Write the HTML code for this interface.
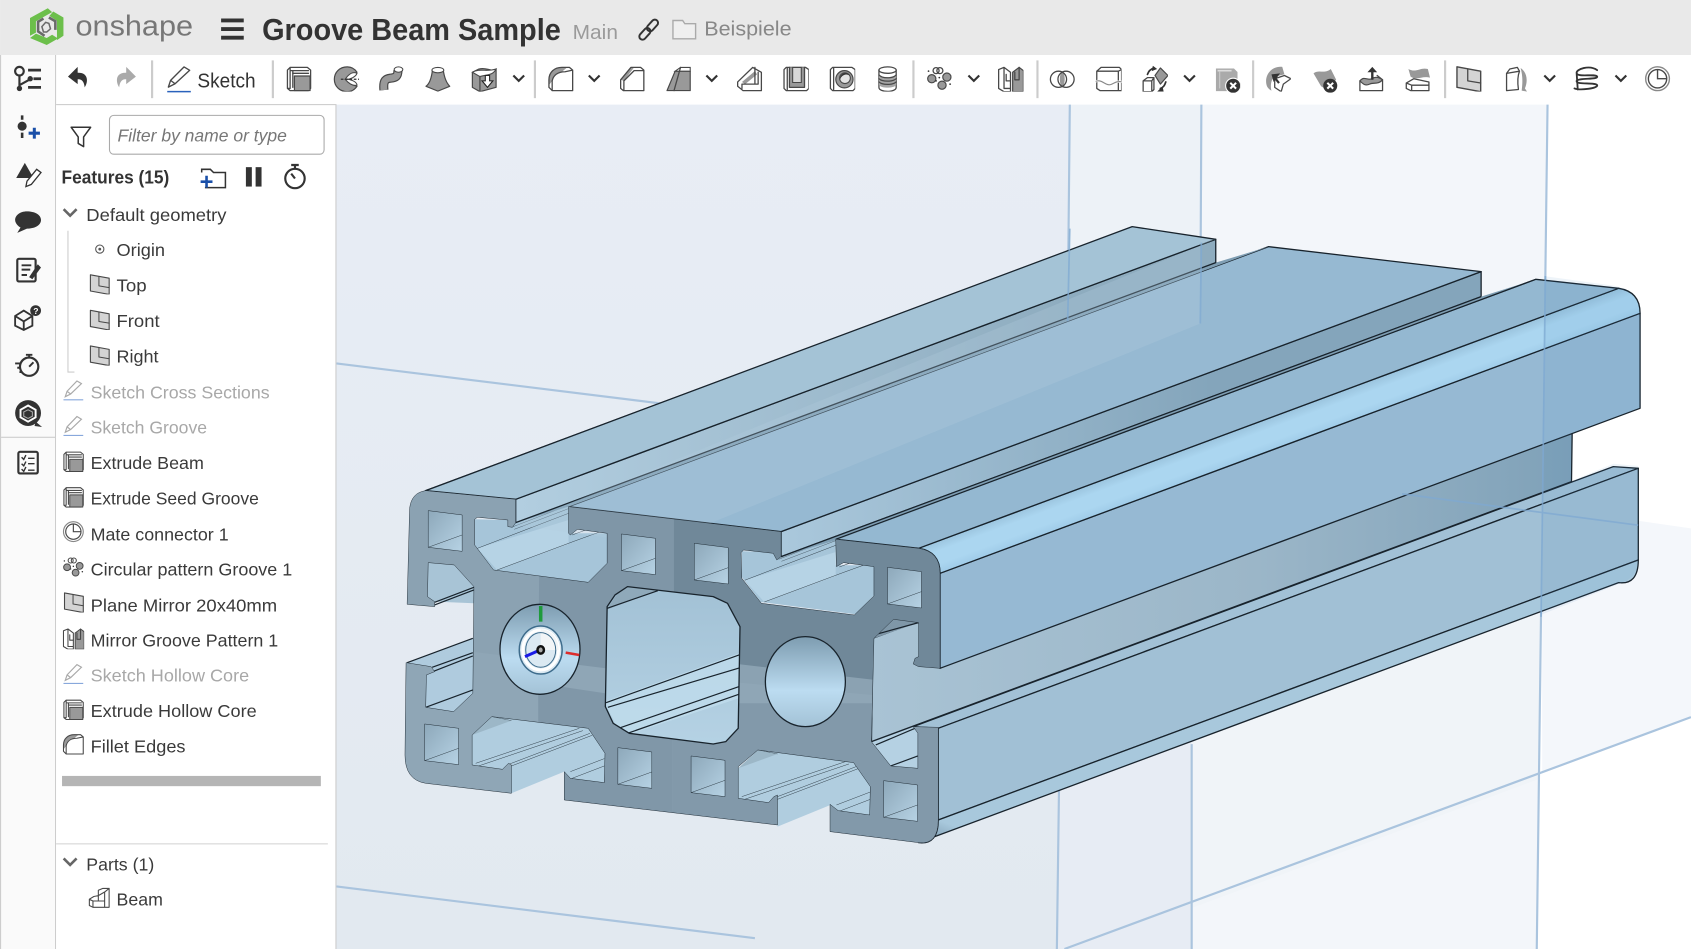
<!DOCTYPE html>
<html><head><meta charset="utf-8"><title>Groove Beam Sample</title>
<style>
html,body{margin:0;padding:0;background:#fff;overflow:hidden}
svg{display:block}
text{font-family:"Liberation Sans",sans-serif;fill:#3a3a3a}
.t{font-size:16px;transform:translateY(.6px)}
.g{fill:#a8a8a8}
.b *{vector-effect:non-scaling-stroke}
.e{stroke:#18232c;stroke-width:1.3;stroke-linejoin:round}
.l{stroke:#18232c;stroke-width:1.2;fill:none}
.i{fill:none;stroke:#484848;stroke-width:1.2;stroke-linejoin:round;stroke-linecap:round}
.f{fill:#999;stroke:#484848;stroke-width:1.100;stroke-linejoin:round}
.n{fill:#999;stroke:none}
.k{fill:#333;stroke:none}
.c{fill:none;stroke:#333;stroke-width:2;stroke-linecap:round;stroke-linejoin:round}
</style></head>
<body>
<svg width="1691" height="949" viewBox="0 0 1568 880" xmlns="http://www.w3.org/2000/svg">
<defs>
<symbol id="ext" viewBox="0 0 24 24"><path class="i" d="M1.500 4 4 1.500H20L23 4V21L21 23H4L1.500 21ZM4 1.500V21L1.500 21M4 4.500H21M6.500 4.500V20"/><path class="f" d="M8 9.500H22.500V23H8Z"/><path class="i" d="M6.500 7H21" stroke="#aaa"/></symbol>
<symbol id="rev" viewBox="0 0 24 24"><path class="f" d="M13 1C6 1 1 6 1 12.500S6 24 13 24C17 24 20 22 22 19 18 18 14 16 12 13 15 10 19 8 22 6 20 3 17 1 13 1Z"/><path d="M11 12.500C14 8 18 5 22 7 21 10 16 13 11 12.500ZM11 12.500C14 16 18 19 22 18 22 15 16 12 11 12.500Z" fill="#fff" stroke="#484848"/><path d="M7 12.500H24" stroke="#333" stroke-width="1.100" stroke-dasharray="2.500 1.500"/></symbol>
<symbol id="swp" viewBox="0 0 24 24"><path d="M5 22.500C4 13 7 12 11 11.500 16 11 18 10 18 4" fill="none" stroke="#484848" stroke-width="8.500"/><path d="M5 22.500C4 13 7 12 11 11.500 16 11 18 10 18 4" fill="none" stroke="#999" stroke-width="6.300"/><ellipse cx="18.500" cy="3.500" rx="4" ry="2.500" fill="#fff" stroke="#484848"/></symbol>
<symbol id="lof" viewBox="0 0 24 24"><path class="f" d="M7 4C6 12 4 17 1 19L12 23.500 23 19C20 16 18 11 17 4Z"/><ellipse cx="12" cy="4" rx="5.500" ry="2.500" fill="#fff" stroke="#484848"/></symbol>
<symbol id="thk" viewBox="0 0 24 24"><path class="f" d="M1 6V20L8 24 23 20V3C17 6 15 1 7 3Z"/><path d="M1 6C8 2 14 6 23 3 20 9 15 8 8 10Z" fill="#fff" stroke="#484848"/><path d="M8 10V24" class="i"/><path d="M13 9H17V14H20L15 20 10 14H13Z" fill="#fff" stroke="#222"/></symbol>
<symbol id="fil" viewBox="0 0 24 24"><path class="n" d="M1 13C1 6 6 1.500 13 1.500H18L13 5.500C8 6 5 9 4 14L1 18Z"/><path class="i" d="M1 13C1 6 6 1.500 13 1.500H20L23 4V23H4L1 20ZM4 14V23M23 4 16 5.500C9 5.500 5 9 4 14"/></symbol>
<symbol id="cha" viewBox="0 0 24 24"><path class="n" d="M1.500 13 11 1.500H14L4.500 14Z"/><path class="i" d="M1.500 13 11 1.500H20L23 4V23H4L1.500 21ZM4.500 14V23M4.500 14 14 4.500H23"/></symbol>
<symbol id="dra" viewBox="0 0 24 24"><path class="f" d="M9 5H23V23H1.500Z"/><path d="M9 5 14 1.500H23V5Z" fill="#fff" stroke="#484848"/><path class="i" d="M14 1.500 8 23"/></symbol>
<symbol id="rib" viewBox="0 0 24 24"><path class="i" d="M1 15 15 1.500 23 6V23H6L1 19Z"/><path class="f" style="stroke:none" d="M5 15 17 5 19 8 8 17Z"/><path class="i" d="M5 21V17H20M17 1.500V17M20 6V17"/></symbol>
<symbol id="she" viewBox="0 0 24 24"><path class="i" d="M1 3.500 3 1.500H21L24 3.500V21L22 23H3L1 21ZM4 1.500V22"/><path class="n" d="M6 1.500H20V20H6Z"/><path d="M9 1.500V15.500H17V1.500Z" fill="#d8d8d8" stroke="#484848"/><path class="i" d="M6 1.500V20H20V1.500"/></symbol>
<symbol id="hol" viewBox="0 0 24 24"><path class="i" d="M1 3.500 3 1.500H21L24 3.500V21L22 23H3L1 21ZM4 1.500V22"/><circle class="f" cx="14" cy="12.500" r="8"/><circle cx="14.500" cy="11.500" r="5" fill="#e4e4e4" stroke="#484848"/><path d="M10 13A5 5 0 0 1 19 9 6 6 0 0 0 10 13Z" fill="#333"/></symbol>
<symbol id="thr" viewBox="0 0 24 24"><path class="i" d="M4 4V20C4 25 20 25 20 20V4"/><ellipse class="i" cx="12" cy="4" rx="8" ry="3"/><path d="M4 8.500C7 12 17 12 20 8.500V18C17 21 7 21 4 18Z" fill="#a5a5a5"/><path class="i" d="M4 8.500C7 12 17 12 20 8.500M4 12C7 15 17 15 20 12M4 15C7 18 17 18 20 15"/></symbol>
<symbol id="pat" viewBox="0 0 24 24"><circle class="i" cx="9" cy="4.500" r="2.800"/><circle class="i" cx="12.500" cy="4.500" r="2.800"/><circle class="f" cx="5" cy="12" r="3.800"/><circle class="f" cx="19" cy="10.500" r="3.800"/><circle class="f" cx="14.500" cy="18" r="3.800"/><circle class="k" cx="2" cy="5" r=".8"/><circle class="k" cx="22" cy="17" r=".8"/><circle class="k" cx="9" cy="14" r=".8"/><circle class="k" cx="12" cy="11" r=".8"/></symbol>
<symbol id="mir" viewBox="0 0 24 24"><path class="i" d="M1 3.500 6 1.500 12 6V24H6L1 21ZM6 1.500V21H12"/><path class="i" d="M12 14H8V8"/><path class="f" d="M14 24V6L20 1.500 24 4.500V24Z"/><path class="i" d="M20 1.500V13H16V6"/></symbol>
<symbol id="boo" viewBox="0 0 24 24"><path class="n" d="M12 5C15 8 15 17 12 20 9 17 9 8 12 5Z"/><circle class="i" cx="8.500" cy="12.500" r="7.500"/><circle class="i" cx="15.500" cy="12.500" r="7.500"/></symbol>
<symbol id="spl" viewBox="0 0 24 24"><path class="i" d="M1 5 5 1.500H22L24 3.500V23H4L1 21ZM1 5H21L24 3.500M21 5V23"/><path d="M-1 15C6 11 9 20 15 17 19 15 21 14 25 15" fill="none" stroke="#fff" stroke-width="2"/><path d="M-1 15C6 11 9 20 15 17 19 15 21 14 25 15" fill="none" stroke="#888" stroke-width="1.100"/></symbol>
<symbol id="tra" viewBox="0 0 24 24"><path class="f" d="M17 2 24 9 17 17 12 9Z"/><path class="i" d="M1 14 5 11H11V22L9 24H1ZM1 14H9V24M9 14 11 11"/><path class="c" style="stroke-width:1.600" d="M5 8C6 5 8 3 11 2M22 15C21 18 20 20 17 21"/><path class="k" d="M10 0 14 3 9 5ZM14 24 19 19 20 24Z"/></symbol>
<symbol id="del" viewBox="0 0 24 24"><path style="fill:#aaa;stroke:#aaa" d="M2 2H18L21 5V22H2Z"/><path d="M3 3.500H16" stroke="#ddd" stroke-width="1.500"/><path d="M5 4V20" stroke="#ccc"/><circle cx="17.500" cy="17.500" r="7" fill="#333" stroke="#fff"/><path d="M14.800 14.800 20.200 20.200M20.200 14.800 14.800 20.200" stroke="#fff" stroke-width="1.900"/></symbol>
<symbol id="mod" viewBox="0 0 24 24"><path class="n" d="M1 14C1 7 7 0 16 1L18 8 9 10C5 13 5 20 6 23 2 21 1 18 1 14Z"/><path class="i" d="M9 12 18 9 24 12 17 17 15 24 9 20Z" style="fill:#fff"/><path class="k" d="M6 8 14 7 8 15Z"/><path d="M9 11 13 16" stroke="#333" stroke-width="2"/></symbol>
<symbol id="dlf" viewBox="0 0 24 24"><path class="n" d="M1 6C6 2 11 7 17 2L22 12 13 21 8 18Z"/><circle class="k" cx="16.500" cy="17.500" r="6.500"/><path d="M13.800 14.800 19.200 20.200M19.200 14.800 13.800 20.200" stroke="#fff" stroke-width="1.900"/></symbol>
<symbol id="mov" viewBox="0 0 24 24"><path class="i" d="M2 14V23H23V13L18 9"/><path class="f" d="M2 14C6 9 9 14 13 12 16 10 19 10 23 13 19 18 14 15 11 17 7 19 5 17 2 14Z"/><path class="c" style="stroke-width:2.200;stroke-linecap:butt" d="M13.500 5V13"/><path class="k" d="M9 6 13.500 1 18 6Z"/></symbol>
<symbol id="rep" viewBox="0 0 24 24"><path class="n" d="M4 3C11 7 15 1 22 3L24 11C17 9 12 14 6 10Z"/><path class="i" d="M2 16 9 12 23 15V23H6L2 21ZM2 16 7 18H23M7 18V23"/></symbol>
<symbol id="pla" viewBox="0 0 24 24"><path d="M1 1 23 5V24L1 20Z" fill="#d4d4d4" stroke="#484848" stroke-width="1.300" stroke-linejoin="round"/><path class="i" d="M11 3V14L23 16"/></symbol>
<symbol id="off" viewBox="0 0 24 24"><path class="n" d="M16 2C22 6 23 14 20 21L22 24 17 23C18 15 18 9 16 2Z"/><path class="i" style="fill:#fff" d="M3 7 6 3 13 1.500 15 5C13 10 13 15 14 22L3 23Z M3 7 15 5"/></symbol>
<symbol id="hel" viewBox="0 0 24 24"><path class="c" style="stroke-width:1.700" d="M22 4C15-1 2 3 3 7S20 7 22 10C23 13 5 11 3 14 2 18 20 15 22 18 23 21 6 23 1 21M3 7 4 22"/></symbol>
<symbol id="mat" viewBox="0 0 24 24"><circle cx="12" cy="12" r="11" fill="none" stroke="#888" stroke-width="1.300"/><circle cx="12" cy="12" r="8.500" fill="none" stroke="#484848" stroke-width="1.300"/><path d="M12 3.500V12H20.500" fill="none" stroke="#484848" stroke-width="1.300"/></symbol>
<symbol id="skt" viewBox="0 0 24 24"><path class="i" d="M2 19 4 13 16 1 21 4 8 16Z M4 13 8 16"/><path d="M1 23H22" stroke="#2a62bc" stroke-width="1.400"/></symbol>
<symbol id="skg" viewBox="0 0 24 24"><path fill="none" stroke="#aaa" stroke-width="1.300" d="M3 19 5 13 16 1.500 21 4.500 9 16Z M5 13 9 16"/><path d="M1 22.500H23" stroke="#88a8dc" stroke-width="1.300"/></symbol>
<symbol id="par" viewBox="0 0 24 24"><path class="i" d="M1 13 6 10 11 9V3L16 1H23V22H5L1 20ZM1 13 5 15H11V9M5 15V22M11 9 18 5V15H11M18 5 23 1M18 15V22"/></symbol>
<symbol id="chv" viewBox="0 0 14 10"><path d="M2 2 7 7 12 2" fill="none" stroke="#333" stroke-width="2"/></symbol>

<linearGradient id="g1" x1="0" y1="0" x2="0" y2="1"><stop offset="0" stop-color="#e8edf5"/><stop offset="1" stop-color="#e2e9f0"/></linearGradient>
<linearGradient id="wall" gradientUnits="userSpaceOnUse" x1="1350" y1="0" x2="3310" y2="0"><stop offset="0" stop-color="#a9c3d4"/><stop offset=".55" stop-color="#9bb6c8"/><stop offset="1" stop-color="#7fa1b8"/></linearGradient>
<linearGradient id="round" gradientUnits="userSpaceOnUse" x1="1480" y1="235" x2="1514" y2="321"><stop offset="0" stop-color="#9cc5df"/><stop offset=".3" stop-color="#abd6f0"/><stop offset=".7" stop-color="#abd6f0"/><stop offset="1" stop-color="#9fcbe8"/></linearGradient>
<linearGradient id="roundb" gradientUnits="userSpaceOnUse" x1="1535" y1="1050" x2="1510" y2="1112"><stop offset="0" stop-color="#a8c8dc"/><stop offset="1" stop-color="#7f9db2"/></linearGradient>
<linearGradient id="sd" gradientUnits="userSpaceOnUse" x1="1095" y1="0" x2="2300" y2="0"><stop offset="0" stop-color="#aac8dc"/><stop offset="1" stop-color="#84a5bb"/></linearGradient>
<linearGradient id="sd2" gradientUnits="userSpaceOnUse" x1="352" y1="0" x2="1900" y2="0"><stop offset="0" stop-color="#b2cee0"/><stop offset="1" stop-color="#8eacbf"/></linearGradient>
<linearGradient id="hole" x1="0" y1="0" x2="0" y2="1"><stop offset="0" stop-color="#a2c1d5"/><stop offset="1" stop-color="#b5d2e4"/></linearGradient>
<linearGradient id="sq" x1="0" y1="0" x2="1" y2="1"><stop offset="0" stop-color="#8da8ba"/><stop offset="1" stop-color="#b6d2e4"/></linearGradient>
<linearGradient id="cir" x1="0" y1="0" x2="0" y2="1"><stop offset="0" stop-color="#7d9cb0"/><stop offset=".6" stop-color="#bcdcf1"/><stop offset="1" stop-color="#a3c2d6"/></linearGradient>

<path id="facep" d="M100 62 352 88V158L343 172 330 170V150L245 142 237 148V225L290 300 555 337 608 280V190L525 178 505 195 500 190V110L1095 185V260L1083 270 1073 250 990 240 983 248 985 325 1040 400 1300 435 1355 378V290L1270 278 1250 290 1248 208 1480 235Q1540 245 1540 310V595L1480 590 1465 582 1470 565 1480 560V458L1410 448 1355 505 1348 815 1402 888 1478 895V790L1465 770 1535 772V1050Q1535 1125 1480 1118L1232 1085V1003L1255 1022 1343 1035 1345 950 1298 878 1030 840 975 890V985L1060 998 1075 980 1085 975V1065L488 990V905L505 925 600 938 602 850 555 775 285 740 230 795V885L315 898 332 880 340 885V970L100 940Q42 930 42 855L45 578 115 590 125 605 102 615 100 712 178 725 232 670 235 350 180 285 107 278 105 380 125 395V410L48 403 55 115Q60 68 100 62Z"/>
<clipPath id="faceclip"><use href="#facep"/></clipPath>
<clipPath id="octo"><path d="M665 350 905 380 945 400 980 470 975 775 940 815 905 822 670 790 625 760 603 710 608 410 630 375Z"/></clipPath>

<g id="slotT">
<path fill="#a6c5d9" d="M237 148 330 150 352 158 500 105 500 190 608 190 608 280 555 337 290 300 237 225Z"/>
<path fill="#bad6e7" d="M245 235 300 300 500 222 500 150Z" opacity=".8"/>
<path class="l" d="M245 235 500 130M300 300 520 212 608 178"/>
<path class="l" stroke-opacity=".75" d="M340 172 500 106M348 178 500 116"/>
<path class="l" d="M510 195 600 160"/>
</g>
<g id="slotB">
<path fill="#b0cddf" d="M230 795 285 740 555 775 602 850V938L505 925 488 905 340 970V880L315 898 230 885Z"/>
<path class="l" d="M285 740 340 752M240 880 530 775M248 888 540 782M335 882 560 790M340 888 566 796"/>
<path class="l" d="M505 905 600 866M510 925 600 888"/>
<path fill="#90a8b8" d="M230 795 285 740 340 752Z" opacity=".6"/>
</g>
<g id="sqh"><path class="e" fill="url(#sq)" d="M0 0 95 13V122L0 110Z"/><path class="l" d="M0 110 95 73"/></g>
</defs>

<!-- chrome backgrounds -->
<rect width="1568" height="880" fill="#fff"/>
<rect width="1568" height="51" fill="#e9e9e9"/>

<!-- viewport -->
<path fill="#fff" d="M312 97H1568V880H312Z"/>
<path fill="url(#g1)" d="M312 97H992L980 880H312Z"/>
<path fill="#edf2f7" d="M992 97H1115L1105 880H980Z"/>
<path fill="#e7ecf4" d="M982 700 1105 660V880H980Z"/>
<path fill="#f3f6fa" d="M1115 97H1435L1425 880H1105Z"/>
<path fill="#f0f4f8" d="M1105 560 1428 470V722L1105 842Z"/>
<path fill="#f4f7fb" d="M1430 470 1568 490V665L1430 716Z"/>
<g fill="none" stroke="#aac4de" stroke-width="2">
<path d="M992 97 990 300M1114 97 1113 300M1435 97 1425 880M982 730 980 880M1105 690V880"/>
<path d="M312 337 620 375M312 822 700 870M1568 665 987 880"/>
</g>

<!-- beam -->
<g class="b" transform="translate(361.6 435.8) scale(.3312 .3091)">
<use href="#slotT"/>
<use href="#slotT" transform="translate(748 96)"/>
<path fill="#a8c4d6" d="M107 278 180 285 235 350V400L125 395 105 380Z"/>
<path class="l" d="M125 397 235 352M125 405 235 360"/>
<path fill="#afcbde" d="M45 578 235 505V670L178 725 100 712 102 615 125 605 115 590Z"/>
<path class="l" d="M48 578 232 505M118 592 232 548M122 604 232 558M100 712 232 660"/>
<use href="#slotB"/>
<use href="#slotB" transform="translate(745 100)"/>
<path fill="#b5d1e3" d="M1348 815 1402 888 1478 895V762Z"/>
<path class="l" d="M1402 888 1478 858M1360 825 1470 775"/>
<path class="e" fill="url(#wall)" d="M1352 505 1348 815 3308 35 3312 -275Z"/>
<path fill="#7f97a8" d="M1355 505 1410 448 1480 458Z"/>
<path class="l" d="M1365 492 1480 458"/>
<path class="e" fill="#a2c1d6" d="M1465 770 1535 775 3495 -5 3425 -10Z"/>
<path class="e" fill="#a1c0d5" d="M1535 775V1050L3495 270V-5Z"/>
<path class="e" fill="url(#roundb)" d="M1535 1050Q1535 1125 1480 1118L3440 338Q3495 345 3495 270Z"/>
<path class="e" fill="#96b9d3" d="M1540 310V595L3500 -185V-470Z"/>
<path class="e" fill="url(#round)" d="M1480 235Q1540 245 1540 310L3500 -470Q3500 -535 3440 -545Z"/>
<path class="e" fill="#94b8d1" d="M1248 208 1480 235 3440 -545 3208 -572Z"/>
<path class="e" fill="url(#sd)" d="M1095 185V260L3055 -520V-595Z"/>
<path fill="#7f9eb3" d="M1095 260 1250 210 3208 -572 3055 -520Z"/>
<path class="l" d="M1095 260 3055 -520M1248 208 3208 -572"/>
<path class="e" fill="#96b9d2" d="M500 110 1095 185 3055 -595 2460 -670Z"/>
<path fill="#7f9eb3" d="M352 158 500 110 2460 -670 2312 -622Z"/>
<path class="e" fill="url(#sd2)" d="M352 88V158L2312 -622V-692Z"/>
<path class="e" fill="#7f95a4" d="M70 82 100 62 2078 -728 2030 -702Z"/>
<path class="e" fill="#a4c3d6" d="M100 62 352 88 2312 -692 2078 -730Z"/>
</g>

<!-- plane tint on beam -->
<path fill="#b4cee0" opacity=".28" d="M1113 300 610 505 478 487 1127 222H1113Z"/>
<path fill="#3f86bc" opacity=".09" d="M1432 256 1497 265Q1521 270 1521 296V378L1457 402V446L1496 430 1519 432V520Q1519 536 1500 542L1429 570Z"/>
<g fill="none" stroke="#7fa9d2" stroke-width="1.600" opacity=".75">
<path d="M992 212 990 298M1114 225 1113 300M1433 256 1429 572"/>
<path d="M1300 458 1519 487"/>
</g>

<!-- front face -->
<g class="b" transform="translate(361.6 435.8) scale(.3312 .3091)">
<use href="#facep" fill="#8ba2b2"/>
<g clip-path="url(#faceclip)">
<path fill="#7f96a7" d="M420 0H800V700L415 650Z"/>
<path fill="#708899" d="M795 0H1600V660L795 560Z"/>
<path fill="#8fa6b6" d="M0 515 795 620 1600 700V1200H0Z"/>
<path fill="#8097a8" d="M415 640 790 700V1200H415Z"/>
<path fill="#8299aa" d="M790 700 1600 700V1200H790Z"/>
</g>
<use href="#facep" fill="none" class="e"/>
<use href="#sqh" x="107" y="122"/><use href="#sqh" x="648" y="192"/>
<use href="#sqh" x="852" y="220"/><use href="#sqh" x="1393" y="292"/>
<use href="#sqh" x="97" y="762"/><use href="#sqh" x="638" y="833"/>
<use href="#sqh" x="843" y="858"/><use href="#sqh" x="1382" y="932"/>
<path fill="url(#hole)" d="M665 350 905 380 945 400 980 470 975 775 940 815 905 822 670 790 625 760 603 710 608 410 630 375Z"/>
<g clip-path="url(#octo)">
<path fill="#c2deee" d="M600 695 990 545V680L650 800Z" opacity=".7"/>
<path fill="#8fa9ba" d="M605 420 650 350 750 362Z"/>
<path class="l" d="M605 698 990 550M610 712 990 590M640 775 990 645M665 790 990 668M608 415 750 362"/>
</g>
<path class="e" fill="none" d="M665 350 905 380 945 400 980 470 975 775 940 815 905 822 670 790 625 760 603 710 608 410 630 375Z"/>
<ellipse class="e" fill="url(#cir)" cx="1163" cy="635" rx="112" ry="135"/>
<ellipse class="e" fill="url(#cir)" cx="420" cy="538" rx="112" ry="135"/>
<ellipse cx="422" cy="540" rx="60" ry="72" fill="#dbe9f2" stroke="#3e6c8c" stroke-width="1.500"/>
<ellipse cx="422" cy="540" rx="50" ry="60" fill="none" stroke="#fff" stroke-width="3"/>
<path d="M422 540V478A50 60 0 0 1 472 540Z" fill="#f2f5f7"/>
<ellipse cx="422" cy="540" rx="42" ry="52" fill="none" stroke="#3e6c8c" stroke-width="1"/>
<path d="M422 408V455" stroke="#1f9a3c" stroke-width="3.500"/>
<path d="M492 548 530 555" stroke="#dd2c2c" stroke-width="2.500"/>
<path d="M378 560 420 540" stroke="#1a1ae6" stroke-width="3"/>
<ellipse cx="422" cy="540" rx="9" ry="11" fill="#aaa" stroke="#111" stroke-width="2.500"/>
</g>

<!-- header -->
<g transform="translate(43.300 24.700)">
<g fill="#6cbf4b">
<path d="M1-17-15.500-8V8.500L-10 5.500V-5L5-13.500Z"/>
<path d="M6-14 15.500-8.500V8.500L9.500 12.500V-5.500L2.500-10Z" />
<path d="M-15.500 10.500 0 17 10.500 11 5 7.500 0 10.500-10 6.500Z"/>
</g>
<path d="M2-8.500 8-5V3M-2 8.500-8 4.500V-4.500L-3-7.500" fill="none" stroke="#6a6a6a" stroke-width="2.400"/>
<path d="M-3 5-4.500 0-1-4 2-3 3.500 2 0 5Z" fill="none" stroke="#6a6a6a" stroke-width="1.400"/>
</g>
<text x="70" y="33" font-size="27" style="fill:#777" textLength="109" lengthAdjust="spacingAndGlyphs">onshape</text>
<path d="M205 19H226M205 27H226M205 35H226" stroke="#333" stroke-width="3.600"/>
<text x="243" y="37" font-size="28" font-weight="700" style="fill:#333" textLength="277" lengthAdjust="spacingAndGlyphs">Groove Beam Sample</text>
<text x="531" y="36" font-size="19" style="fill:#9a9a9a" textLength="42" lengthAdjust="spacingAndGlyphs">Main</text>
<g transform="rotate(-48 601.500 27.500)" fill="none" stroke="#333" stroke-width="1.800"><rect x="590" y="24.500" width="12.500" height="6" rx="3"/><rect x="600.500" y="24.500" width="12.500" height="6" rx="3"/></g>
<path d="M624 36V19H633L635 22H645V36Z" fill="#efefef" stroke="#aaa" stroke-width="1.300"/>
<text x="653" y="33" font-size="19" style="fill:#888" textLength="81" lengthAdjust="spacingAndGlyphs">Beispiele</text>

<!-- toolbar -->
<g fill="#ccc">
<rect x="140" y="56" width="2" height="35"/><rect x="252" y="56" width="2" height="35"/><rect x="495" y="56" width="2" height="35"/><rect x="846" y="56" width="2" height="35"/><rect x="961" y="56" width="2" height="35"/><rect x="1161" y="56" width="2" height="35"/><rect x="1339" y="56" width="2" height="35"/>
</g>
<path d="M72 62 63 71 72 78V73.500C76 73 78 76 78.500 81 82 76 82 67 72 67.500Z" fill="#333"/>
<path d="M117 62 126 71 117 78V73.500C113 73 111 76 110.500 81 107 76 107 67 117 67.500Z" fill="#aaa"/>
<use href="#skt" x="154" y="61" width="25" height="25"/>
<text x="183" y="81" font-size="18.500" style="fill:#333" textLength="54" lengthAdjust="spacingAndGlyphs">Sketch</text>
<use href="#ext" x="265" y="61" width="24" height="24"/>
<use href="#rev" x="309" y="61" width="24" height="24"/>
<use href="#swp" x="351" y="61" width="24" height="24"/>
<use href="#lof" x="394" y="61" width="24" height="24"/>
<use href="#thk" x="437" y="61" width="24" height="24"/>
<use href="#chv" x="474" y="68" width="14" height="10"/>
<use href="#fil" x="508" y="61" width="24" height="24"/>
<use href="#chv" x="544" y="68" width="14" height="10"/>
<use href="#cha" x="574" y="61" width="24" height="24"/>
<use href="#dra" x="617" y="61" width="24" height="24"/>
<use href="#chv" x="653" y="68" width="14" height="10"/>
<use href="#rib" x="683" y="61" width="24" height="24"/>
<use href="#she" x="726" y="61" width="24" height="24"/>
<use href="#hol" x="769" y="61" width="24" height="24"/>
<use href="#thr" x="811" y="61" width="24" height="24"/>
<use href="#pat" x="859" y="61" width="24" height="24"/>
<use href="#chv" x="896" y="68" width="14" height="10"/>
<use href="#mir" x="925" y="61" width="24" height="24"/>
<use href="#boo" x="973" y="61" width="24" height="24"/>
<use href="#spl" x="1016" y="61" width="24" height="24"/>
<use href="#tra" x="1059" y="61" width="24" height="24"/>
<use href="#chv" x="1096" y="68" width="14" height="10"/>
<use href="#del" x="1126" y="62" width="24" height="24"/>
<use href="#mod" x="1173" y="61" width="24" height="24"/>
<use href="#dlf" x="1217" y="62" width="24" height="24"/>
<use href="#mov" x="1259" y="61" width="24" height="24"/>
<use href="#rep" x="1302" y="61" width="24" height="24"/>
<use href="#pla" x="1350" y="61" width="24" height="24"/>
<use href="#off" x="1394" y="61" width="24" height="24"/>
<use href="#chv" x="1430" y="68" width="14" height="10"/>
<use href="#hel" x="1459" y="61" width="24" height="24"/>
<use href="#chv" x="1496" y="68" width="14" height="10"/>
<use href="#mat" x="1525" y="61" width="24" height="24"/>

<!-- left rail -->
<rect x="0" y="51" width="51" height="829" fill="#fafafa"/>
<rect x="0" y="51" width="1" height="829" fill="#ccc"/>
<rect x="51" y="51" width="1" height="829" fill="#ccc"/>
<rect x="1" y="405" width="50" height="1" fill="#ccc"/>
<g>
<circle cx="18" cy="66" r="4" fill="none" stroke="#333" stroke-width="2"/><path d="M18 70V82M18 79 27 74" fill="none" stroke="#333" stroke-width="2"/><circle cx="18" cy="82" r="2.500" fill="#333"/><circle cx="28" cy="73" r="2.500" fill="#333"/><path d="M26 65H38M31 73H38M26 81H38" stroke="#333" stroke-width="2.500"/>
<path d="M20.500 107V111M20.500 123V128" stroke="#333" stroke-width="2.400"/><circle cx="20.500" cy="117" r="4.200" fill="#333"/><path d="M26.500 123.500H37M31.800 118.500V128.500" stroke="#1a4fa8" stroke-width="2.800"/>
<path d="M15 165 23 151 31 165Z" fill="#333"/><path d="M25 168 34 157 38 160 29 171 24 173Z" fill="#fff" stroke="#333" stroke-width="1.200"/>
<path d="M25 196C18 196 14 200 14 204 14 207 17 210 19 211L16 216 25 212C32 212 38 209 38 204S32 196 25 196Z" fill="#333"/>
<rect x="16" y="240" width="17" height="21" rx="1.500" fill="none" stroke="#333" stroke-width="2"/><path d="M20 246H29M20 250H28M20 255H25" stroke="#333" stroke-width="1.800"/><path d="M27 257 35 245 38 248 30 259Z" fill="#333"/>
<path d="M14 293 22 288 30 293V302L22 306 14 302ZM14 293 22 298 30 293M22 298V306" fill="none" stroke="#333" stroke-width="1.700"/><circle cx="33" cy="288" r="5" fill="#333"/><text x="30.800" y="291" font-size="8" font-weight="700" style="fill:#fff">?</text>
<circle cx="27" cy="340" r="8.500" fill="none" stroke="#333" stroke-width="2"/><path d="M24 329H30M27 329V332M27 340 31 336M14 337H19M16 341H19M18 345H20" stroke="#333" stroke-width="1.800"/>
<circle cx="26" cy="383" r="12" fill="#333"/><path d="M26 376 33 380V387L26 391 19 387V380Z" fill="none" stroke="#fff" stroke-width="1.800"/><path d="M26 380 30 382V386L26 388 22 386V382Z" fill="none" stroke="#aaa"/><path d="M33 391 39 396 32 395Z" fill="#333"/>
<rect x="17" y="419" width="18" height="20" rx="1.500" fill="none" stroke="#333" stroke-width="2"/><path d="M20 424 22 426 24 422M20 430 22 432 24 428M20 435 22 437 24 433M26 425H32M26 430H32M26 436H32" fill="none" stroke="#333" stroke-width="1.300"/>
</g>

<!-- feature panel -->
<rect x="52" y="97" width="259" height="783" fill="#fff"/>
<rect x="52" y="96.500" width="260" height="1" fill="#ccc"/>
<rect x="311" y="97" width="1" height="783" fill="#ccc"/>
<path d="M66 118H84L77.500 127V136L72.500 133V127Z" fill="none" stroke="#333" stroke-width="1.400" stroke-linejoin="round"/>
<rect x="101.500" y="107" width="199" height="36" rx="4" fill="#fff" stroke="#aaa"/>
<text x="109" y="131" font-size="16.500" font-style="italic" style="fill:#777" textLength="157" lengthAdjust="spacingAndGlyphs">Filter by name or type</text>
<text x="57" y="170" font-size="17" font-weight="700" style="fill:#333" textLength="100" lengthAdjust="spacingAndGlyphs">Features (15)</text>
<path d="M187 160V157H195L198 160H209V174H190" fill="none" stroke="#333" stroke-width="1.400"/><path d="M186 168.500H197M191.500 163V174" stroke="#1a4fa8" stroke-width="2.400"/>
<rect x="228" y="155" width="5.500" height="18" fill="#333"/><rect x="237" y="155" width="5.500" height="18" fill="#333"/>
<circle cx="273.500" cy="165.500" r="9" fill="none" stroke="#333" stroke-width="2"/><path d="M270 153H277M273.500 153V156M273.500 165.500 270 161" stroke="#333" stroke-width="2"/>

<path d="M59 194 65 200 71 194" fill="none" stroke="#666" stroke-width="2.400"/>
<text class="t" x="80" y="204.500" textLength="130" lengthAdjust="spacingAndGlyphs">Default geometry</text>
<path d="M63 214V345H69" fill="none" stroke="#ccc" stroke-width="1"/>
<circle cx="92.500" cy="231" r="3.800" fill="none" stroke="#555"/><circle cx="92.500" cy="231" r="1.300" fill="#555"/>
<text class="t" x="108" y="237" textLength="45" lengthAdjust="spacingAndGlyphs">Origin</text>
<use href="#pla" x="83" y="254" width="19" height="19"/>
<text class="t" x="108" y="269.500" textLength="28" lengthAdjust="spacingAndGlyphs">Top</text>
<use href="#pla" x="83" y="287" width="19" height="19"/>
<text class="t" x="108" y="302.500" textLength="40" lengthAdjust="spacingAndGlyphs">Front</text>
<use href="#pla" x="83" y="320" width="19" height="19"/>
<text class="t" x="108" y="335.500" textLength="39" lengthAdjust="spacingAndGlyphs">Right</text>
<use href="#skg" x="58" y="352" width="20" height="20"/>
<text class="t g" x="84" y="369" textLength="166" lengthAdjust="spacingAndGlyphs">Sketch Cross Sections</text>
<use href="#skg" x="58" y="385" width="20" height="20"/>
<text class="t g" x="84" y="401.500" textLength="108" lengthAdjust="spacingAndGlyphs">Sketch Groove</text>
<use href="#ext" x="58" y="418" width="20" height="20"/>
<text class="t" x="84" y="434.500" textLength="105" lengthAdjust="spacingAndGlyphs">Extrude Beam</text>
<use href="#ext" x="58" y="451" width="20" height="20"/>
<text class="t" x="84" y="467" textLength="156" lengthAdjust="spacingAndGlyphs">Extrude Seed Groove</text>
<use href="#mat" x="58" y="483" width="20" height="20"/>
<text class="t" x="84" y="500.500" textLength="128" lengthAdjust="spacingAndGlyphs">Mate connector 1</text>
<use href="#pat" x="58" y="516" width="20" height="20"/>
<text class="t" x="84" y="533" textLength="187" lengthAdjust="spacingAndGlyphs">Circular pattern Groove 1</text>
<use href="#pla" x="59" y="549" width="19" height="19"/>
<text class="t" x="84" y="566.500" textLength="173" lengthAdjust="spacingAndGlyphs">Plane Mirror 20x40mm</text>
<use href="#mir" x="58" y="582" width="20" height="20"/>
<text class="t" x="84" y="599" textLength="174" lengthAdjust="spacingAndGlyphs">Mirror Groove Pattern 1</text>
<use href="#skg" x="58" y="615" width="20" height="20"/>
<text class="t g" x="84" y="631.500" textLength="147" lengthAdjust="spacingAndGlyphs">Sketch Hollow Core</text>
<use href="#ext" x="58" y="648" width="20" height="20"/>
<text class="t" x="84" y="664.500" textLength="154" lengthAdjust="spacingAndGlyphs">Extrude Hollow Core</text>
<use href="#fil" x="58" y="680" width="20" height="20"/>
<text class="t" x="84" y="697" textLength="88" lengthAdjust="spacingAndGlyphs">Fillet Edges</text>
<rect x="57.500" y="719.500" width="240" height="9.500" fill="#b5b5b5"/>
<rect x="52" y="782" width="252" height="1" fill="#d4d4d4"/>
<path d="M59 796 65 802 71 796" fill="none" stroke="#666" stroke-width="2.400"/>
<text class="t" x="80" y="806.500" textLength="63" lengthAdjust="spacingAndGlyphs">Parts (1)</text>
<use href="#par" x="82" y="823" width="20" height="20"/>
<text class="t" x="108" y="839" textLength="43" lengthAdjust="spacingAndGlyphs">Beam</text>
</svg>
</body></html>
